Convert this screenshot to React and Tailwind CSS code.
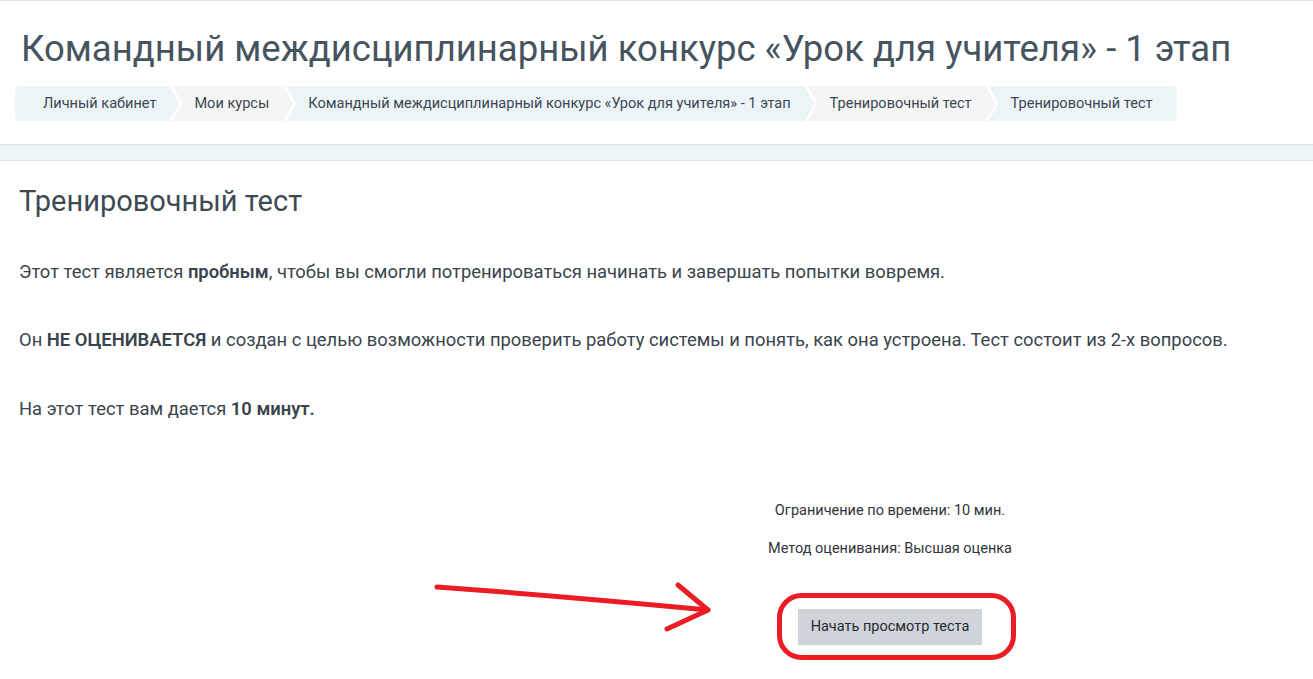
import React from "react";

const crumbs = [
  { t: "Личный кабинет", bg: "bg-[#edf4f8]" },
  { t: "Мои курсы", bg: "bg-[#f5f5f5]" },
  { t: "Командный междисциплинарный конкурс «Урок для учителя» - 1 этап", bg: "bg-[#edf4f8]" },
  { t: "Тренировочный тест", bg: "bg-[#f5f5f5]" },
  { t: "Тренировочный тест", bg: "bg-[#edf4f8]" },
];

function Breadcrumb() {
  return (
    <div className="flex h-[35px] w-max overflow-hidden rounded-[4px]">
      {crumbs.map((c, i) => {
        const first = i === 0;
        const last = i === crumbs.length - 1;
        let cls = "";
        if (first) cls = "pl-[28px] pr-[23px] [clip-path:polygon(0_0,calc(100%-10px)_0,100%_50%,calc(100%-10px)_100%,0_100%)]";
        else if (last) cls = "ml-[-7px] pl-[22px] pr-[24px] [clip-path:polygon(0_0,100%_0,100%_100%,0_100%,10px_50%)]";
        else cls = "ml-[-7px] pl-[22px] pr-[24px] [clip-path:polygon(0_0,calc(100%-10px)_0,100%_50%,calc(100%-10px)_100%,0_100%,10px_50%)]";
        return (
          <div key={i} className={`flex items-center whitespace-nowrap text-[14.55px] text-[#3b4751] ${c.bg} ${cls}`}>
            {c.t}
          </div>
        );
      })}
    </div>
  );
}

export default function App() {
  return (
    <div className="relative min-h-[679px] w-[1313px] overflow-hidden bg-white font-['Roboto',sans-serif] text-[#3a444c]">
      <header className="border-t border-b border-[#dde3e7] bg-white pl-[15px] pt-[22px] pb-[23px]">
        <h1 className="ml-[6px] text-[36.5px] leading-[52px] text-[#45545f] whitespace-nowrap">
          Командный междисциплинарный конкурс «Урок для учителя» - 1 этап
        </h1>
        <div className="mt-[11px]">
          <Breadcrumb />
        </div>
      </header>
      <div className="h-[16px] border-b border-[#dde3e7] bg-[#ebf4f7]" />
      <main className="px-[19px] pt-[21px]">
        <h2 className="text-[29px] leading-[38px] text-[#3d4a54]">Тренировочный тест</h2>
        <div className="mt-[38px] text-[18.4px] leading-[27px]">
          <p>
            Этот тест является <b className="font-semibold">пробным</b>, чтобы вы смогли потренироваться начинать и завершать попытки вовремя.
          </p>
          <p className="mt-[41px]">
            Он <b className="font-semibold">НЕ ОЦЕНИВАЕТСЯ</b> и создан с целью возможности проверить работу системы и понять, как она устроена. Тест состоит из 2-х вопросов.
          </p>
          <p className="mt-[42px]">
            На этот тест вам дается <b className="font-semibold">10 минут.</b>
          </p>
        </div>
        <div className="ml-[590px] mt-[78px] flex w-[562px] flex-col items-center text-[14.5px] text-[#2f3539]">
          <p className="leading-[21px]">Ограничение по времени: 10 мин.</p>
          <p className="mt-[17px] leading-[21px]">Метод оценивания: Высшая оценка</p>
          <button className="mt-[50px] h-[36px] bg-[#ced4da] px-[13px] text-[14.5px] leading-[36px] text-[#262b30]">
            Начать просмотр теста
          </button>
        </div>
      </main>
      <svg className="pointer-events-none absolute left-0 top-0" width="1313" height="679">
        <g fill="none" stroke="#ec1c24" strokeWidth="5" strokeLinecap="round" strokeLinejoin="round">
          <path d="M437 587 Q 560 596 708 610" />
          <path d="M678 585 L708 610 L667 629" />
          <rect x="779.5" y="595.5" width="234" height="62" rx="22" ry="22" />
        </g>
      </svg>
    </div>
  );
}
